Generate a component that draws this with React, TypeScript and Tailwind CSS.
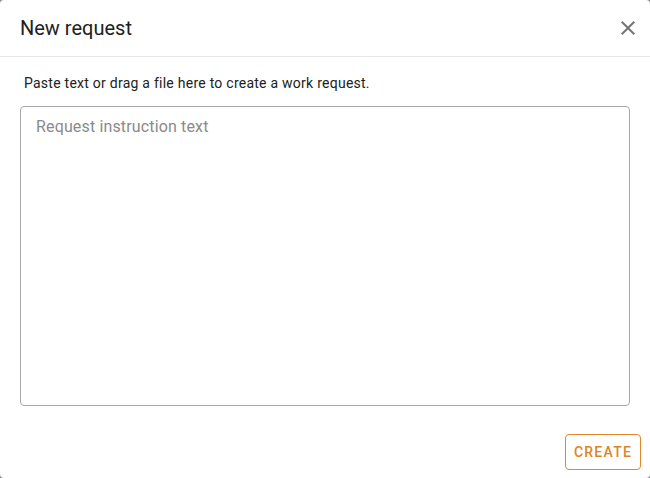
import React from 'react';

const App = () => {
  return (
    <div className="w-[650px] h-[478px] bg-[#8a8a8a] font-['Roboto',sans-serif]">
      <div className="w-full h-full bg-white rounded-[4px] flex flex-col overflow-hidden">
        {/* Header */}
        <div className="h-[57px] shrink-0 flex items-center justify-between pl-[20px] pr-[8px] border-b border-[#e8e8e8]">
          <h2 className="text-[20px] text-[#212121] leading-none">New request</h2>
          <button className="w-[28px] h-[28px] flex items-center justify-center text-[#757575]">
            <svg width="24" height="24" viewBox="0 0 24 24" fill="currentColor">
              <path d="M19 6.41 17.59 5 12 10.59 6.41 5 5 6.41 10.59 12 5 17.59 6.41 19 12 13.41 17.59 19 19 17.59 13.41 12z" />
            </svg>
          </button>
        </div>

        {/* Body */}
        <div className="flex-1 flex flex-col px-[20px] pt-[16px]">
          <p className="text-[14px] text-[#212121] pl-[4px] leading-[20px] tracking-[0.25px]">
            Paste text or drag a file here to create a work request.
          </p>
          <textarea
            className="mt-[13px] h-[300px] w-full resize-none rounded-[4px] border border-[#a8a8a8] px-[15px] py-[10px] text-[16px] leading-[20px] tracking-[0.15px] text-[#212121] placeholder:text-[#8a8a8a] outline-none font-['Roboto',sans-serif]"
            placeholder="Request instruction text"
          />
        </div>

        {/* Footer */}
        <div className="flex justify-end px-[9px] pb-[8px]">
          <button className="w-[76px] h-[36px] rounded-[4px] border border-[#e0882a] text-[#dd8426] text-[14px] font-medium tracking-[1.25px] uppercase">
            Create
          </button>
        </div>
      </div>
    </div>
  );
};

export default App;
